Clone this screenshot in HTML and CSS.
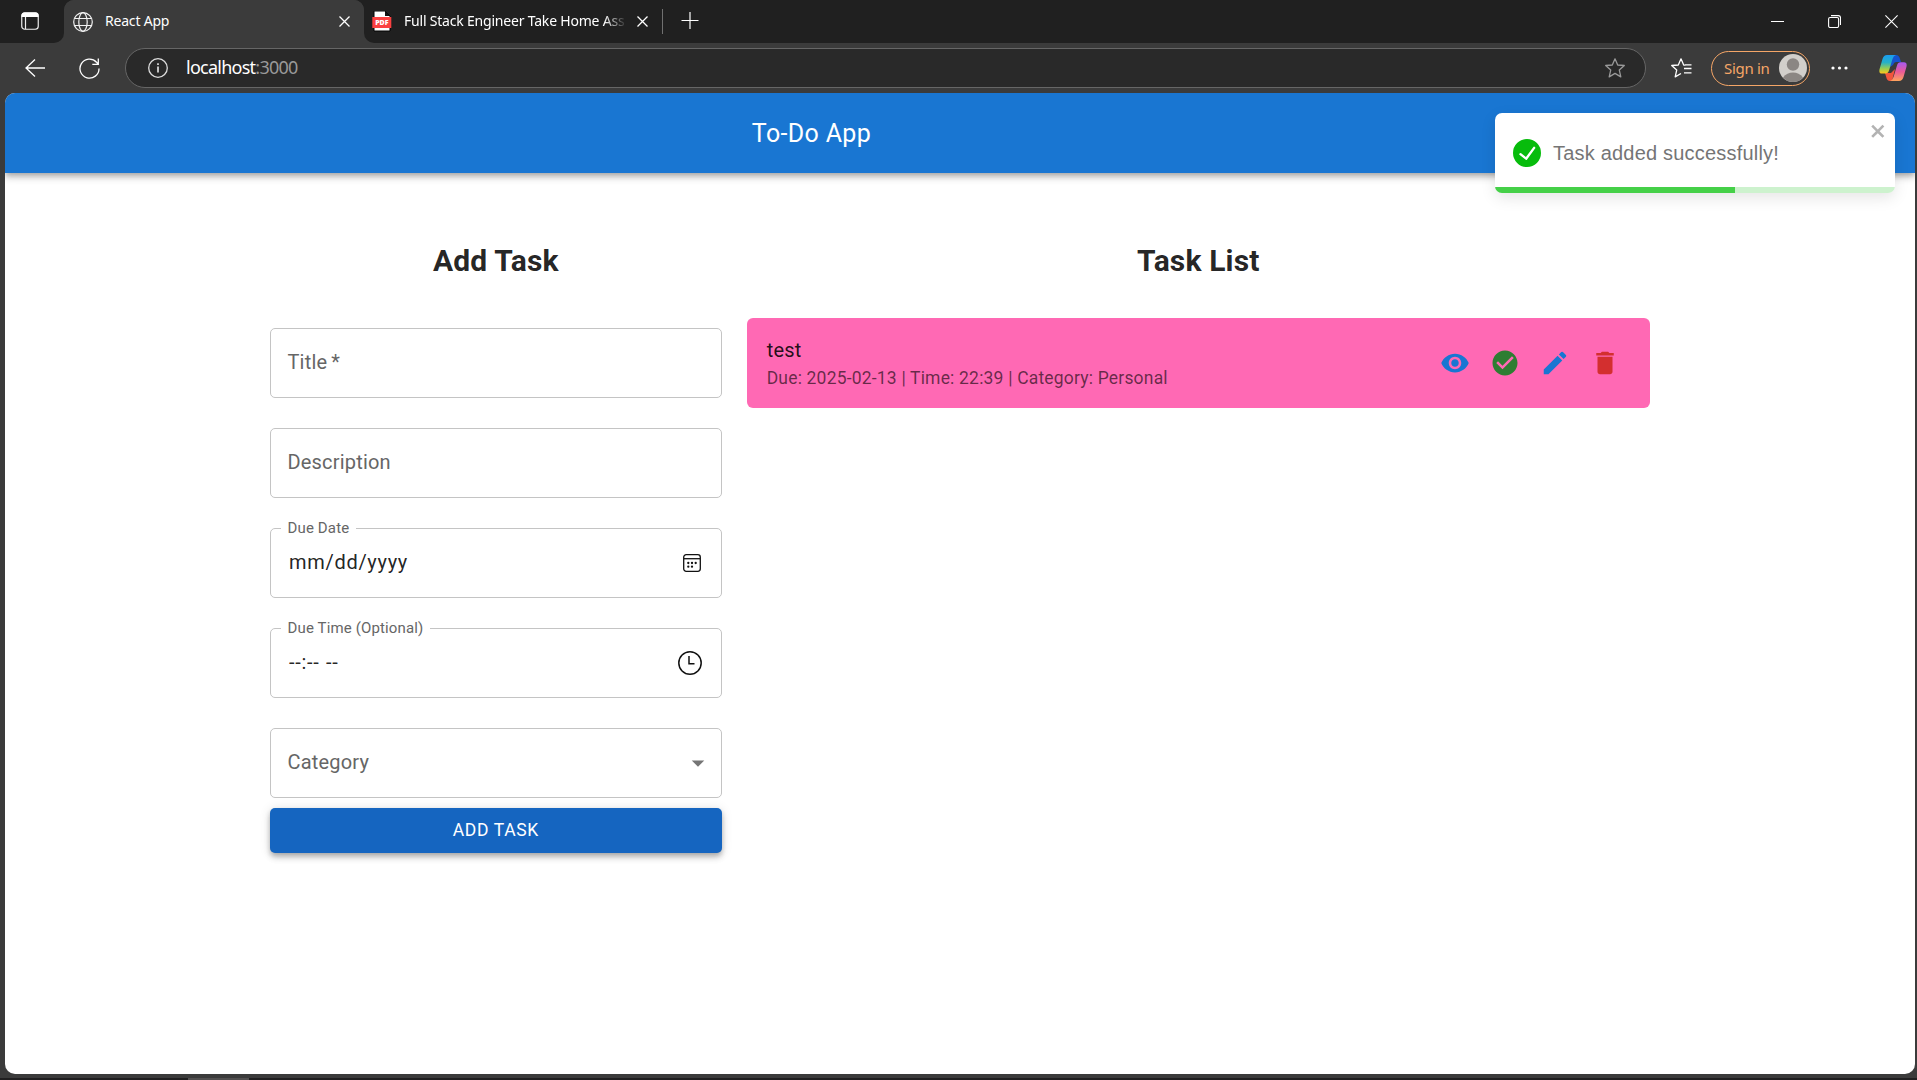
FILE: index.html
```html
<!DOCTYPE html>
<html lang="en">
<head>
<meta charset="utf-8">
<title>React App</title>
<link rel="stylesheet" href="styles.css">
</head>
<body>
<div class="browser">
  <div class="tabstrip">
    <div class="tab-actions">
      <svg width="18" height="18" viewBox="0 0 18 18"><rect x=".75" y=".75" width="16.5" height="16.5" rx="3" fill="none" stroke="#eee" stroke-width="1.2"/><path d="M.5 5V3.500Q.5.5 3.500.5H14.500Q17.500.5 17.500 3.500V5Z" fill="#fff"/><path d="M4.500 5V17" stroke="#eee" stroke-width="1.200"/></svg>
    </div>
    <div class="tab tab-active">
      <svg class="globe" width="20" height="20" viewBox="0 0 20 20" fill="none" stroke="#f2f2f2" stroke-width="1.200"><circle cx="10" cy="10" r="9.300"/><ellipse cx="10" cy="10" rx="4.200" ry="9.300"/><path d="M1.500 6.500H18.500M1.500 13.500H18.500"/></svg>
      <span class="tab-title">React App</span>
      <svg class="tab-close" width="11" height="11" viewBox="0 0 11 11"><path d="M.5.5 10.500 10.500M10.500.5.5 10.500" stroke="#fff" stroke-width="1.300"/></svg>
    </div>
    <div class="tab tab-pdf">
      <svg class="pdf" width="20" height="21" viewBox="0 0 20 21"><path d="M2 0H13L18 5V20H2Z" fill="#fff" stroke="#000" stroke-width="1"/><path d="M13 0V5H18Z" fill="#111"/><rect x=".3" y="6" width="19" height="11" fill="#fb4141"/><text x="9.800" y="14.200" text-anchor="middle" class="pdf-text">PDF</text></svg>
      <span class="tab-title faded">Full Stack Engineer Take Home Ass</span>
      <svg class="tab-close" width="11" height="11" viewBox="0 0 11 11"><path d="M.5.5 10.500 10.500M10.500.5.5 10.500" stroke="#fff" stroke-width="1.300"/></svg>
    </div>
    <div class="tab-divider"></div>
    <svg class="new-tab" width="18" height="18" viewBox="0 0 18 18"><path d="M9 .5V17.500M.5 9H17.500" stroke="#fff" stroke-width="1.200"/></svg>
    <div class="window-controls">
      <svg width="13" height="13" viewBox="0 0 13 13"><path d="M0 6.500H13" stroke="#fff"/></svg>
      <svg width="13" height="13" viewBox="0 0 13 13" fill="none" stroke="#fff" stroke-width="1.100"><rect x=".6" y="2.500" width="10" height="10" rx="1.500"/><path d="M3 .6H10.400Q12.500.6 12.500 2.700V10"/></svg>
      <svg width="13" height="13" viewBox="0 0 13 13"><path d="M.4.4 12.600 12.600M12.600.4.4 12.600" stroke="#fff" stroke-width="1.100"/></svg>
    </div>
  </div>
  <div class="toolbar">
    <svg class="back" width="20" height="18" viewBox="0 0 20 18" fill="none" stroke="#fff" stroke-width="1.300"><path d="M20 9H1M10 .5 1 9 10 17.500"/></svg>
    <svg class="reload" width="21" height="21" viewBox="0 0 21 21" fill="none" stroke="#fff" stroke-width="1.300"><path d="M20 10.500A9.500 9.500 0 1 1 17.500 4.200L19 6M19.300.5V6.300H13.300"/></svg>
    <div class="address">
      <svg class="info" width="20" height="20" viewBox="0 0 20 20" fill="none" stroke="#ddd" stroke-width="1.300"><circle cx="10" cy="10" r="9.300"/><path d="M10 8.500V14.500M10 5.200V7" stroke-width="1.700"/></svg>
      <span class="url">localhost<span class="port">:3000</span></span>
      <svg class="star" width="20" height="20" viewBox="0 0 20 20" fill="none" stroke="#999" stroke-width="1.300" stroke-linejoin="round"><path d="M10 .8 12.700 7 19.300 7.500 14.300 12.100 15.800 18.900 10 15.400 4.200 18.900 5.700 12.100.7 7.500 7.300 7Z"/></svg>
    </div>
    <svg class="favorites" width="21" height="20" viewBox="0 0 21 20" fill="none" stroke="#fff" stroke-width="1.300" stroke-linejoin="round"><path d="M14.500 7.200 12.700 7 10 .8 7.300 7 .7 7.500 5.700 12.100 4.200 18.900 10 15.500M13 10.500H20.500M13 14.800H20.500M14 6.800H20.500"/></svg>
    <div class="signin"><span>Sign in</span>
      <svg width="28" height="28" viewBox="0 0 28 28"><circle cx="14" cy="14" r="14" fill="#d2cfcb"/><circle cx="14" cy="10.500" r="6.200" fill="#8b8683"/><path d="M4 23.500Q8 18.500 14 18.500T24 23.500Q20 28 14 28T4 23.500Z" fill="#8b8683"/></svg>
    </div>
    <svg class="more" width="17" height="4" viewBox="0 0 17 4" fill="#fff"><circle cx="2" cy="2" r="1.600"/><circle cx="8.500" cy="2" r="1.600"/><circle cx="15" cy="2" r="1.600"/></svg>
    <svg class="copilot" width="28" height="26" viewBox="0 0 28 26">
      <defs>
        <linearGradient id="ga" x1="0" y1="0" x2="0" y2="1"><stop offset="0" stop-color="#1a9cf0"/><stop offset=".4" stop-color="#25b0c8"/><stop offset=".75" stop-color="#9fce4b"/><stop offset="1" stop-color="#ffc41c"/></linearGradient>
        <linearGradient id="gb" x1="0" y1="0" x2="0" y2="1"><stop offset="0" stop-color="#a659f2"/><stop offset=".5" stop-color="#ea5a98"/><stop offset="1" stop-color="#ffa45c"/></linearGradient>
      </defs>
      <path d="M12 0H17Q20 0 21 4L22 7H17Q15 7 14 10L11 12Z" fill="#1553ce"/>
      <path d="M6 18H12L16 14 13 26H11Q8 26 7.200 22Z" fill="#f2553d"/>
      <path d="M8 0H17Q14.500.7 13.500 4L10 15.500Q9.200 18.500 6.500 18.500H3Q-.5 18.500.6 14L3.500 4Q4.700 0 8 0Z" fill="url(#ga)"/>
      <path d="M20 26H11Q13.500 25.300 14.500 22L18 10.500Q18.900 7.300 21.500 7.300H25Q28.500 7.300 27.400 12L24.500 22Q23.300 26 20 26Z" fill="url(#gb)"/>
    </svg>
  </div>

  <main class="page">
    <header class="appbar"><h1>To-Do App</h1></header>
    <div class="content">
      <section class="form">
        <h2>Add Task</h2>
        <div class="fields">
          <div class="field"><span class="placeholder">Title<span class="asterisk">*</span></span></div>
          <div class="field"><span class="placeholder">Description</span></div>
          <div class="field"><span class="label">Due Date</span><span class="value date">mm/dd/yyyy</span>
            <svg class="calendar" width="18" height="18" viewBox="0 0 18 18"><rect x=".7" y=".7" width="16.600" height="16.600" rx="2.500" fill="none" stroke="#111" stroke-width="1.300"/><path d="M1 4.700H17" stroke="#111" stroke-width="1.300"/><g fill="#111"><circle cx="5.300" cy="9" r="1.150"/><circle cx="9" cy="9" r="1.150"/><circle cx="12.700" cy="9" r="1.150"/><circle cx="5.300" cy="12.700" r="1.150"/><circle cx="9" cy="12.700" r="1.150"/></g></svg>
          </div>
          <div class="field"><span class="label">Due Time (Optional)</span><span class="value time">--:-- --</span>
            <svg class="clock" width="24" height="24" viewBox="0 0 24 24" fill="none" stroke="#111"><circle cx="12" cy="12" r="11.200" stroke-width="1.500"/><path d="M11 5V12.800H16.500" stroke-width="1.500"/></svg>
          </div>
          <div class="field"><span class="placeholder">Category</span>
            <svg class="arrow" width="30" height="30" viewBox="0 0 24 24" fill="#757575"><path d="m7 10 5 5 5-5z"/></svg>
          </div>
        </div>
        <button class="submit">ADD TASK</button>
      </section>
      <section class="list">
        <h2>Task List</h2>
        <article class="task">
          <div class="task-text">
            <div class="task-name">test</div>
            <div class="task-meta">Due: 2025-02-13 | Time: 22:39 | Category: Personal</div>
          </div>
          <div class="task-actions">
            <svg viewBox="0 0 24 24" fill="#1976d2"><path d="M12 4.500C7 4.500 2.730 7.610 1 12c1.730 4.390 6 7.500 11 7.500s9.270-3.110 11-7.500c-1.730-4.390-6-7.500-11-7.500M12 17c-2.760 0-5-2.240-5-5s2.240-5 5-5 5 2.240 5 5-2.240 5-5 5m0-8c-1.660 0-3 1.340-3 3s1.340 3 3 3 3-1.340 3-3-1.340-3-3-3"/></svg>
            <svg viewBox="0 0 24 24" fill="#2e7d32"><path d="M12 2C6.480 2 2 6.480 2 12s4.480 10 10 10 10-4.480 10-10S17.520 2 12 2m-2 15-5-5 1.410-1.410L10 14.170l7.590-7.590L19 8z"/></svg>
            <svg viewBox="0 0 24 24" fill="#1976d2"><path d="M3 17.250V21h3.750L17.810 9.940l-3.750-3.750zM20.710 7.040c.39-.39.39-1.020 0-1.410l-2.340-2.340a.996.996 0 0 0-1.410 0l-1.830 1.830 3.750 3.750z"/></svg>
            <svg viewBox="0 0 24 24" fill="#d32f2f"><path d="M6 19c0 1.100.9 2 2 2h8c1.100 0 2-.9 2-2V7H6zM19 4h-3.500l-1-1h-5l-1 1H5v2h14z"/></svg>
          </div>
        </article>
      </section>
    </div>
  </main>
  <div class="taskbar"><div class="taskbar-item"></div></div>
</div>

<div class="toast">
  <svg class="toast-icon" viewBox="0 0 24 24" fill="#07bc0c"><path d="M12 0a12 12 0 1012 12A12.014 12.014 0 0012 0zm6.927 8.200l-6.845 9.289a1.011 1.011 0 01-1.430.188l-4.888-3.908a1 1 0 111.250-1.562l4.076 3.261 6.227-8.451a1 1 0 111.610 1.183z"/></svg>
  <span>Task added successfully!</span>
  <svg class="toast-close" viewBox="0 0 14 16" fill="#b3b3b3"><path fill-rule="evenodd" d="M7.710 8.230l3.750 3.750-1.480 1.480-3.750-3.750-3.750 3.750L1 11.980l3.750-3.750L1 4.480 2.480 3l3.750 3.750L9.980 3l1.480 1.480-3.750 3.750z"/></svg>
  <div class="progress"><div class="progress-fill" style="width:60%"></div></div>
</div>
</body>
</html>
```
FILE: styles.css
```css
* { box-sizing: border-box; }
body { margin: 0; overflow: hidden; font-family: Roboto, sans-serif; }
svg { display: block; flex: none; }
h1, h2 { margin: 0; }

.browser { width: 1917px; height: 1080px; background: #3b3b3b; display: flex; flex-direction: column; }

/* Tab strip */
.tabstrip { height: 43px; flex: none; display: flex; align-items: center; background: #3b3b3b; font-family: "Noto Sans", sans-serif; color: #fff; }
.tab-actions { width: 64px; height: 43px; background: #202020; border-bottom-right-radius: 10px; padding: 12px 0 0 21px; }
.tab { height: 43px; display: flex; align-items: center; }
.tab-active { width: 300px; padding: 0 14px 0 9px; background: linear-gradient(#3b3b3b, #3b3b3b); border-radius: 10px 10px 0 0; box-shadow: 0 -10px 0 #202020; }
.tab-title { font-size: 14px; line-height: 20px; white-space: nowrap; margin-left: 12px; padding-bottom: 2px; letter-spacing: -0.2px; }
.tab-close { margin-left: auto; }
.tab-pdf { width: 298px; background: #202020; border-bottom-left-radius: 10px; padding: 0 14px 0 8px; }
.faded { width: 223px; overflow: hidden; -webkit-mask-image: linear-gradient(90deg, #000 200px, transparent 223px); mask-image: linear-gradient(90deg, #000 200px, transparent 223px); }
.pdf-text { font: 900 7px "Noto Sans", sans-serif; fill: #fff; }
.tab-divider { width: 19px; height: 43px; background: linear-gradient(#707070, #707070) 0 9px / 1px 25px no-repeat #202020; }
.new-tab { width: 38px; height: 43px; padding: 0 20px 2px 0; background: #202020; }
.window-controls { flex: 1; height: 43px; background: #202020; display: flex; justify-content: flex-end; align-items: center; gap: 44px; padding-right: 19px; }

/* Toolbar */
.toolbar { height: 50px; flex: none; display: flex; align-items: center; }
.back { margin-left: 25px; }
.reload { margin-left: 34px; }
.address { margin-left: 25px; width: 1521px; height: 40px; border: 1px solid #666; border-radius: 20px; background: #292929; display: flex; align-items: center; padding: 0 20px 0 22px; }
.url { margin-left: 18px; padding-bottom: 2px; font: 18px/24px "Noto Sans", sans-serif; color: #fff; letter-spacing: -0.75px; }
.port { color: #999; }
.star { margin-left: auto; }
.favorites { margin-left: 25px; }
.signin { margin-left: 19px; width: 99px; height: 35px; border: 1.500px solid #f5a667; border-radius: 18px; display: flex; align-items: center; justify-content: space-between; padding: 0 2px 0 12px; font: 15px/20px "Noto Sans", sans-serif; letter-spacing: -0.3px; color: #f5a667; }
.signin span { padding-bottom: 1px; }
.more { margin-left: 21px; }
.copilot { margin-left: 31px; }

/* Page */
.page { width: 1910px; height: 981px; margin-left: 5px; flex: none; background: #fff; border-radius: 10px; overflow: hidden; }
.appbar { position: relative; height: 80px; background: #1976d2; color: #fff; padding: 21px 297px 0 0; text-align: center; box-shadow: 0 2.500px 5px -1px rgba(0,0,0,.2), 0 5px 6px 0 rgba(0,0,0,.14), 0 1px 12px 0 rgba(0,0,0,.12); }
.appbar h1 { font-size: 25px; font-weight: 400; line-height: 40px; letter-spacing: .35px; }
.content { margin: 65px 265px 0; display: grid; grid-template-columns: 1fr 2fr; gap: 25px; color: rgba(0,0,0,.87); }
.content h2 { padding-top: 1px; font-size: 30px; font-weight: 700; line-height: 44px; letter-spacing: .15px; text-align: center; }
.fields { margin-top: 45px; display: grid; gap: 30px; }
.field { position: relative; height: 70px; border: 1px solid #c4c4c4; border-radius: 5px; display: flex; align-items: center; padding: 0 17px 0 16.500px; font-size: 20px; line-height: 28px; letter-spacing: .19px; }
.placeholder { color: #666; padding-bottom: 2px; }
.asterisk { margin-left: 4px; }
.label { position: absolute; left: 10px; top: -15px; background: #fff; padding: 0 7px 0 6.500px; font-size: 15px; line-height: 28px; letter-spacing: .14px; color: #666; }
.value { padding: 0 0 2px 1.500px; }
.date { letter-spacing: .7px; }
.time { letter-spacing: .7px; word-spacing: 1px; }
.field svg { margin-left: auto; }
.calendar { margin-right: 3px; }
.clock { margin-right: 2px; }
.field .arrow { margin-right: -9px; }
.submit { display: block; width: 100%; height: 45px; margin-top: 10px; padding: 0 0 2px; border: 0; border-radius: 5px; background: #1565c0; color: #fff; font: 400 17.500px/30px Roboto, sans-serif; letter-spacing: .65px; box-shadow: 0 2.500px 5px -1px rgba(0,0,0,.2), 0 5px 6px 0 rgba(0,0,0,.14), 0 1px 12px 0 rgba(0,0,0,.12); }

.task { margin-top: 35px; height: 90px; border-radius: 6px; background: #ff69b4; display: flex; align-items: center; justify-content: space-between; padding: 0 30px 0 20px; }
.task-name { font-size: 20px; line-height: 28px; padding-bottom: 2px; letter-spacing: .19px; }
.task-meta { font-size: 17.500px; line-height: 25px; letter-spacing: .19px; color: rgba(0,0,0,.6); }
.task-actions { display: flex; gap: 20px; }
.task-actions svg { width: 30px; height: 30px; }

.taskbar { margin-top: 4px; height: 2px; background: #201f20; padding-left: 188px; }
.taskbar-item { width: 61px; height: 2px; background: #525050; }

/* Toast notification */
.toast { position: absolute; left: 1495px; top: 113px; width: 400px; height: 80px; border-radius: 7px; overflow: hidden; background: #fff; box-shadow: 0 5px 15px rgba(0,0,0,.1); display: flex; align-items: center; padding: 0 0 1px 18px; gap: 12px; font: 20px/28px "Liberation Sans", Arial, sans-serif; letter-spacing: .2px; color: #757575; }
.toast-icon { width: 28px; height: 28px; }
.toast-close { position: absolute; right: 8px; top: 8px; width: 17.500px; height: 20px; }
.progress { position: absolute; left: 0; right: 0; bottom: 0; height: 6px; background: #cdf2ce; }
.progress-fill { height: 6px; background: #45d048; }
```
